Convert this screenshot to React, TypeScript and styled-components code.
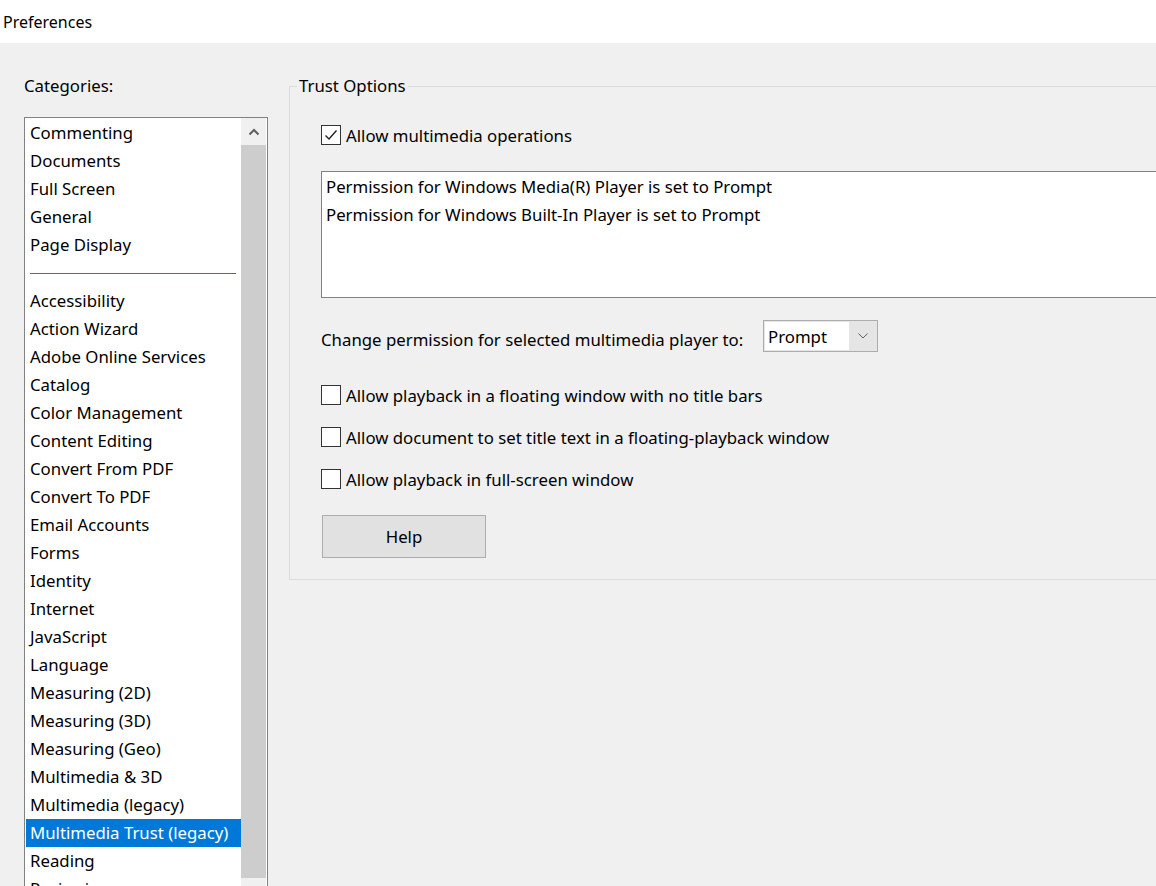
import React from "react";
import styled, { createGlobalStyle } from "styled-components";

const GlobalStyle = createGlobalStyle`
	html, body {
		margin: 0;
		padding: 0;
		width: 1156px;
		height: 886px;
		overflow: hidden;
		background: #f0f0f0;
	}
	body {
		font-family: "Segoe UI", "Noto Sans", "Open Sans", sans-serif;
		font-size: 16.8px;
		color: #000;
	}
`;

const categories: (string | null)[] = [
	"Commenting",
	"Documents",
	"Full Screen",
	"General",
	"Page Display",
	null,
	"Accessibility",
	"Action Wizard",
	"Adobe Online Services",
	"Catalog",
	"Color Management",
	"Content Editing",
	"Convert From PDF",
	"Convert To PDF",
	"Email Accounts",
	"Forms",
	"Identity",
	"Internet",
	"JavaScript",
	"Language",
	"Measuring (2D)",
	"Measuring (3D)",
	"Measuring (Geo)",
	"Multimedia & 3D",
	"Multimedia (legacy)",
	"Multimedia Trust (legacy)",
	"Reading",
	"Reviewing",
];

const selected = "Multimedia Trust (legacy)";

const options = [
	{ label: "Allow playback in a floating window with no title bars", checked: false },
	{ label: "Allow document to set title text in a floating-playback window", checked: false },
	{ label: "Allow playback in full-screen window", checked: false },
];

const Window = styled.div`
	display: flex;
	flex-direction: column;
	height: 886px;
`;

const TitleBar = styled.div`
	height: 43px;
	background: #fff;
	display: flex;
	align-items: center;
	padding-left: 3px;
	font-size: 16px;
	flex-shrink: 0;
`;

const Body = styled.div`
	flex: 1;
	display: flex;
	align-items: flex-start;
	padding: 32px 0 0 24px;
	gap: 21px;
	overflow: hidden;
`;

const Sidebar = styled.div`
	display: flex;
	flex-direction: column;
	width: 244px;
	flex-shrink: 0;
`;

const SideLabel = styled.div`
	height: 22px;
	line-height: 22px;
	margin-bottom: 20px;
`;

const ListBox = styled.div`
	display: flex;
	border: 1px solid #828282;
	background: #fff;
	height: 780px;
`;

const Items = styled.ul`
	flex: 1;
	margin: 0;
	padding: 1px 0 0 1px;
	list-style: none;
`;

const Item = styled.li<{ $active?: boolean }>`
	height: 28px;
	line-height: 28px;
	padding-left: 4px;
	white-space: nowrap;
	background: ${({ $active }) => ($active ? "#0078d7" : "transparent")};
	color: ${({ $active }) => ($active ? "#fff" : "#000")};
`;

const SeparatorItem = styled.li`
	height: 28px;
	display: flex;
	align-items: center;
	padding: 0 4px 0 4px;
	&::after {
		content: "";
		flex: 0 0 206px;
		height: 1px;
		background: #1a7fbf;
	}
`;

const ScrollBar = styled.div`
	width: 25px;
	display: flex;
	flex-direction: column;
	background: #f0f0f0;
	margin-right: 1px;
`;

const ScrollArrow = styled.div`
	height: 27px;
	display: flex;
	align-items: center;
	justify-content: center;
	flex-shrink: 0;
`;

const ScrollThumb = styled.div`
	height: 733px;
	background: #cdcdcd;
`;

const GroupBox = styled.fieldset`
	margin: 0;
	width: 900px;
	flex-shrink: 0;
	border: 1px solid #dcdcdc;
	padding: 0 0 21px 31px;
	display: flex;
	flex-direction: column;
	align-items: flex-start;
`;

const Legend = styled.legend`
	margin-left: -24px;
	padding: 0 2px 0 2px;
	height: 22px;
	line-height: 22px;
`;

const CheckRow = styled.label<{ $top: number }>`
	display: flex;
	align-items: center;
	height: 20px;
	gap: 5px;
	margin-top: ${({ $top }) => $top}px;
	white-space: nowrap;
`;

const Box = styled.span`
	width: 18px;
	height: 18px;
	border: 1px solid #333;
	background: #fff;
	display: flex;
	align-items: center;
	justify-content: center;
	flex-shrink: 0;
`;

const PlayerList = styled.div`
	margin-top: 26px;
	width: 840px;
	border: 1px solid #828282;
	background: #fff;
	padding: 1px 0 0 4px;
	box-sizing: border-box;
	height: 127px;
`;

const PlayerLine = styled.div`
	height: 28px;
	line-height: 28px;
	white-space: nowrap;
`;

const PermissionRow = styled.div`
	display: flex;
	align-items: center;
	margin-top: 22px;
	margin-bottom: 14px;
`;

const PermissionLabel = styled.span`
	width: 442px;
	padding-top: 6px;
	white-space: nowrap;
`;

const Select = styled.div`
	width: 115px;
	height: 32px;
	box-sizing: border-box;
	border: 1px solid #adadad;
	background: #e5e5e5;
	display: flex;
	padding: 1px;
`;

const SelectValue = styled.div`
	flex: 1;
	background: #fff;
	display: flex;
	align-items: center;
	padding-left: 3px;
`;

const SelectArrow = styled.div`
	width: 27px;
	display: flex;
	align-items: center;
	justify-content: center;
`;

const Button = styled.button`
	margin-top: 26px;
	margin-left: 1px;
	width: 164px;
	height: 43px;
	border: 1px solid #adadad;
	background: #e1e1e1;
	font: inherit;
	color: #000;
	padding: 0;
`;

function Check() {
	return (
		<svg width="16" height="16" viewBox="0 0 16 16">
			<path d="M2.5 8.5 L6 12 L13.5 3.5" fill="none" stroke="#222" strokeWidth="1.4" />
		</svg>
	);
}

function CheckBox({ checked, label, top }: { checked: boolean; label: string; top: number }) {
	return (
		<CheckRow $top={top}>
			<Box>{checked && <Check />}</Box>
			{label}
		</CheckRow>
	);
}

export default function App() {
	return (
		<>
			<GlobalStyle />
			<Window>
				<TitleBar>Preferences</TitleBar>
				<Body>
					<Sidebar>
						<SideLabel>Categories:</SideLabel>
						<ListBox>
							<Items>
								{categories.map((c, i) =>
									c === null ? (
										<SeparatorItem key={`sep-${i}`} />
									) : (
										<Item key={c} $active={c === selected}>
											{c}
										</Item>
									)
								)}
							</Items>
							<ScrollBar>
								<ScrollArrow>
									<svg width="12" height="8" viewBox="0 0 12 8">
										<path d="M1.5 6.5 L6 2 L10.5 6.5" fill="none" stroke="#606060" strokeWidth="2" />
									</svg>
								</ScrollArrow>
								<ScrollThumb />
							</ScrollBar>
						</ListBox>
					</Sidebar>

					<GroupBox>
						<Legend>Trust Options</Legend>
						<CheckBox checked label="Allow multimedia operations" top={28} />
						<PlayerList>
							<PlayerLine>Permission for Windows Media(R) Player is set to Prompt</PlayerLine>
							<PlayerLine>Permission for Windows Built-In Player is set to Prompt</PlayerLine>
						</PlayerList>
						<PermissionRow>
							<PermissionLabel>Change permission for selected multimedia player to:</PermissionLabel>
							<Select>
								<SelectValue>Prompt</SelectValue>
								<SelectArrow>
									<svg width="10" height="6" viewBox="0 0 10 6">
										<path d="M0.5 0.5 L5 5 L9.5 0.5" fill="none" stroke="#606060" strokeWidth="1" />
									</svg>
								</SelectArrow>
							</Select>
						</PermissionRow>
						{options.map((o, i) => (
							<CheckBox key={o.label} checked={o.checked} label={o.label} top={i === 0 ? 19 : 22} />
						))}
						<Button>Help</Button>
					</GroupBox>
				</Body>
			</Window>
		</>
	);
}
